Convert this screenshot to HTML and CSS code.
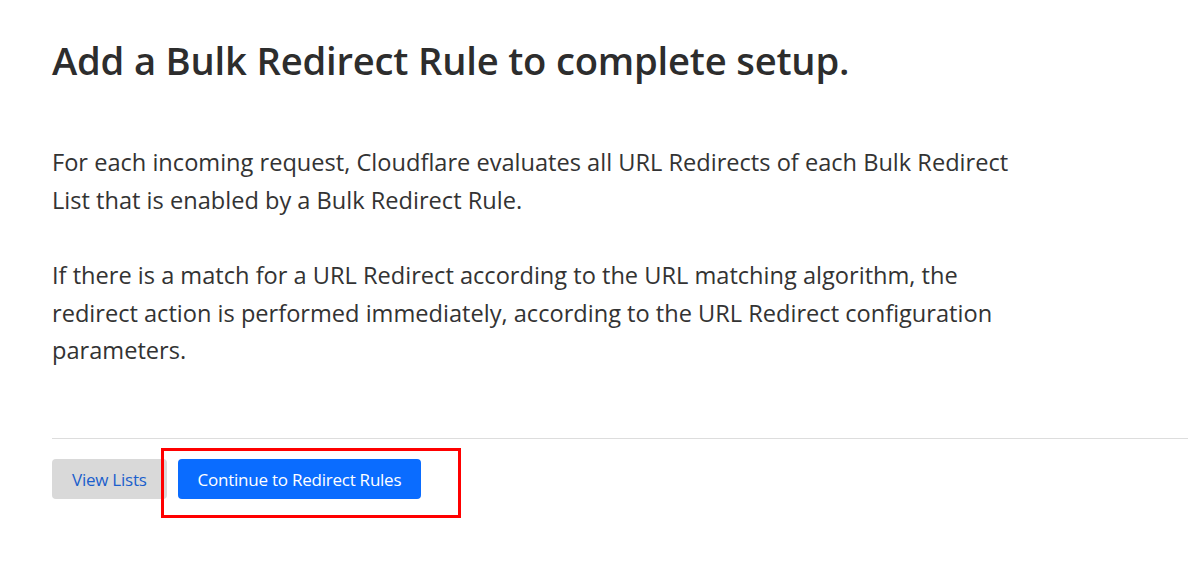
FILE: index.html
```html
<!DOCTYPE html>
<html lang="en">
<head>
<meta charset="utf-8">
<title>Bulk Redirect Rule</title>
<link rel="stylesheet" href="styles.css">
</head>
<body>
<main class="page">
  <h1 class="title">Add a Bulk Redirect Rule to complete setup.</h1>
  <div class="content">
    <p class="text">For each incoming request, Cloudflare evaluates all URL Redirects of each Bulk Redirect List that is enabled by a Bulk Redirect Rule.</p>
    <p class="text">If there is a match for a URL Redirect according to the URL matching algorithm, the redirect action is performed immediately, according to the URL Redirect configuration parameters.</p>
  </div>
  <hr class="divider">
  <div class="actions">
    <button class="btn btn-secondary">View Lists</button>
    <div class="highlight">
      <button class="btn btn-primary">Continue to Redirect Rules</button>
    </div>
  </div>
</main>
</body>
</html>
```

FILE: styles.css
```css
html, body {
  margin: 0;
  padding: 0;
  background: #ffffff;
}
body {
  font-family: "Open Sans", "Noto Sans", "Liberation Sans", sans-serif;
  color: #333333;
}
.page {
  padding: 30px 0 40px 52px;
}
.title {
  margin: 0;
  font-size: 38.2px;
  font-weight: 600;
  line-height: 60px;
  color: #2d2d2d;
  letter-spacing: -0.2px;
}
.content {
  margin-top: 54px;
  max-width: 975px;
}
.text {
  margin: 0 0 38px 0;
  font-size: 23.6px;
  line-height: 37.5px;
  color: #333333;
}
.text:last-child {
  margin-bottom: 0;
}
.divider {
  margin: 68px 0 0 0;
  border: 0;
  border-top: 1px solid #dddddd;
  height: 0;
}
.actions {
  display: flex;
  align-items: flex-start;
  margin-top: 20px;
}
.btn {
  font-family: "Open Sans", "Noto Sans", "Liberation Sans", sans-serif;
  font-size: 17px;
  height: 40px;
  border: 0;
  border-radius: 4px;
  padding: 2px 20px 0;
  cursor: pointer;
  letter-spacing: -0.24px;
}
.btn-secondary {
  background: #d9d9d9;
  color: #1b5fcc;
}
.btn-primary {
  background: #0a6cff;
  color: #ffffff;
}
.highlight {
  display: flex;
  margin: -11px 0 0 -6px;
  padding: 8px 37px 16px 14px;
  border: 3px solid #ff0000;
}
```
